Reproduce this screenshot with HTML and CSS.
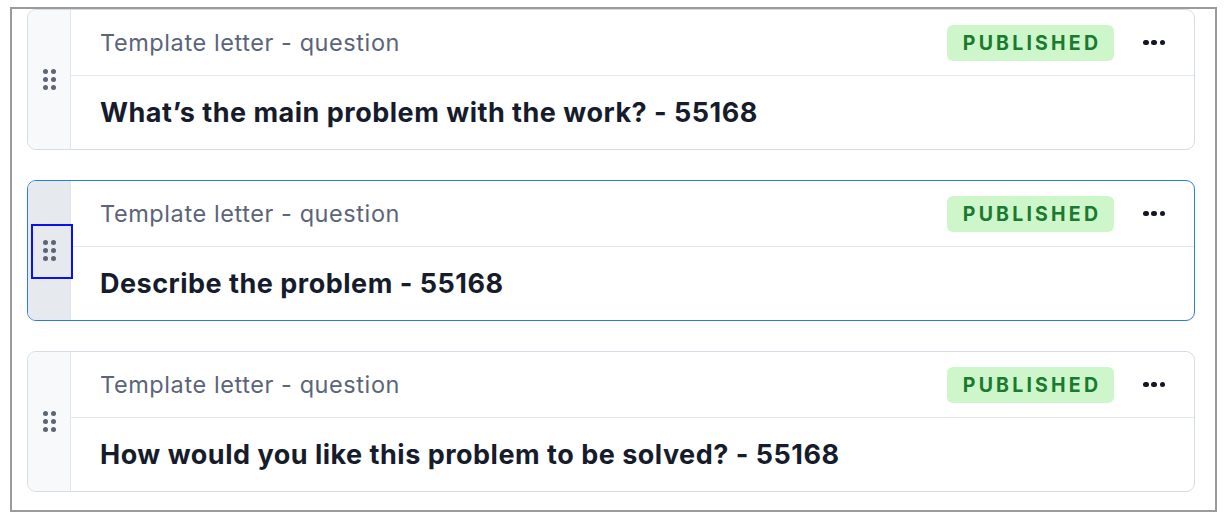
FILE: index.html
```html
<!DOCTYPE html>
<html lang="en">
<head>
<meta charset="utf-8">
<title>Template letter questions</title>
<link rel="stylesheet" href="styles.css">
</head>
<body>
<div class="frame">
  <div class="list">
    <div class="card">
      <div class="handle"><span class="grip"><i></i><i></i><i></i><i></i><i></i><i></i></span></div>
      <div class="content">
        <div class="head">
          <span class="sub">Template letter - question</span>
          <span class="badge">PUBLISHED</span>
          <span class="more"><i></i><i></i><i></i></span>
        </div>
        <div class="body"><span class="title">What’s the main problem with the work? - 55168</span></div>
      </div>
    </div>
    <div class="card active">
      <div class="handle focus"><span class="grip"><i></i><i></i><i></i><i></i><i></i><i></i></span></div>
      <div class="content">
        <div class="head">
          <span class="sub">Template letter - question</span>
          <span class="badge">PUBLISHED</span>
          <span class="more"><i></i><i></i><i></i></span>
        </div>
        <div class="body"><span class="title">Describe the problem - 55168</span></div>
      </div>
    </div>
    <div class="card">
      <div class="handle"><span class="grip"><i></i><i></i><i></i><i></i><i></i><i></i></span></div>
      <div class="content">
        <div class="head">
          <span class="sub">Template letter - question</span>
          <span class="badge">PUBLISHED</span>
          <span class="more"><i></i><i></i><i></i></span>
        </div>
        <div class="body"><span class="title">How would you like this problem to be solved? - 55168</span></div>
      </div>
    </div>
  </div>
</div>
</body>
</html>
```
FILE: styles.css
```css
*, *::before, *::after { box-sizing: border-box; }
html, body { margin: 0; padding: 0; background: #ffffff; }
body { font-family: Inter, "Noto Sans", sans-serif; }

.frame {
  margin: 7px 0 0 10px;
  width: 1207px;
  height: 505px;
  border: 2px solid #9b9b9b;
  padding: 0 20px 0 15px;
}

.list {
  display: flex;
  flex-direction: column;
  gap: 30px;
}

.card {
  position: relative;
  display: flex;
  height: 141px;
  border: 1.5px solid #d5dce4;
  border-radius: 9px;
  overflow: hidden;
  background: #fff;
}
.card.active { border: 1.75px solid #2a7be6; overflow: visible; }

.handle {
  position: relative;
  width: 43px;
  flex: none;
  background: #f7f9fb;
  border-right: 1.5px solid #e1e6ec;
  display: flex;
  align-items: center;
  justify-content: center;
  border-radius: 8px 0 0 8px;
}
.card.active .handle { background: #e6eaee; }
.handle.focus::after {
  content: "";
  position: absolute;
  left: 3px;
  top: 43px;
  width: 42px;
  height: 55px;
  border: 2.5px solid #0a10f0;
}

.grip {
  display: grid;
  grid-template-columns: 5px 5px;
  grid-auto-rows: 5px;
  gap: 3px 3px;
}
.grip i {
  display: block;
  width: 5px;
  height: 5px;
  border-radius: 50%;
  background: #5d6677;
}

.content {
  flex: 1;
  display: flex;
  flex-direction: column;
}

.head {
  height: 66px;
  display: flex;
  align-items: center;
  padding: 0 29px 0 29px;
  border-bottom: 1.5px solid #e3e8ee;
}
.sub {
  flex: 1;
  font-size: 23.5px;
  color: #5b6479;
  letter-spacing: 0.58px;
}
.badge {
  width: 167px;
  height: 36px;
  border-radius: 6px;
  background: #cdf6ca;
  color: #1a7a2f;
  font-weight: 700;
  font-size: 19.5px;
  letter-spacing: 3.2px;
  display: flex;
  align-items: center;
  justify-content: center;
  padding-left: 3px;
}
.more {
  margin-left: 29px;
  width: 22px;
  display: flex;
  justify-content: space-between;
  align-items: center;
}
.more i {
  display: block;
  width: 5.5px;
  height: 5.5px;
  border-radius: 50%;
  background: #141826;
}

.body {
  flex: 1;
  display: flex;
  align-items: center;
  padding: 0 29px;
}
.title {
  font-size: 27px;
  font-weight: 700;
  color: #161c2c;
  letter-spacing: 0.5px;
}
```
